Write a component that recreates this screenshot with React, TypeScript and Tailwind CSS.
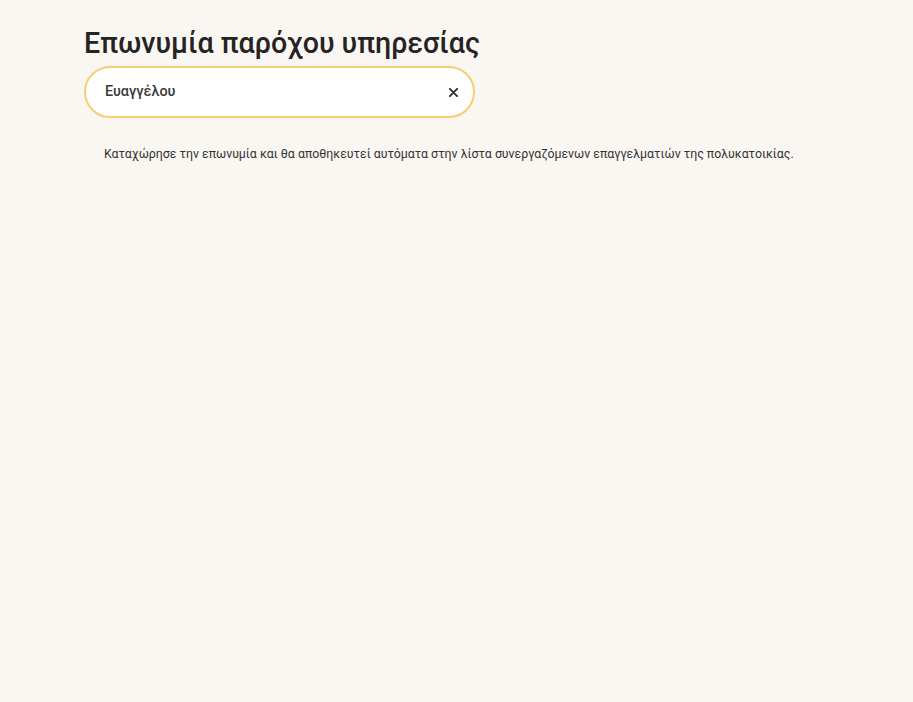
import React, { useState } from 'react';

const App: React.FC = () => {
    const [name, setName] = useState('Ευαγγέλου');

    return (
        <div className="min-h-[702px] w-full bg-[#faf7f2] font-['Roboto','Noto_Sans',sans-serif] text-[#242424]">
            <div className="pl-[84px] pt-[24px]">
                {/* 제목 */}
                <h1 className="text-[28.6px] font-medium leading-[38px]">Επωνυμία παρόχου υπηρεσίας</h1>

                {/* 입력창 */}
                <div className="mt-[4px] flex h-[52px] w-[391px] items-center rounded-full border-2 border-[#f7cd72] bg-white pl-[19px] pr-[10px]">
                    <input
                        value={name}
                        onChange={(e) => setName(e.target.value)}
                        className="flex-1 bg-transparent text-[14.4px] font-medium text-[#3a3a3a] outline-none"
                    />
                    <button
                        type="button"
                        onClick={() => setName('')}
                        className="flex h-5 w-5 items-center justify-center text-[#2a2a2a]"
                    >
                        <svg width="9" height="9" viewBox="0 0 10 10" fill="none">
                            <path d="M1 1L9 9M9 1L1 9" stroke="currentColor" strokeWidth="2" strokeLinecap="round" />
                        </svg>
                    </button>
                </div>

                {/* 안내 문구 */}
                <p className="mt-[27px] pl-[20px] text-[12.35px] leading-[18px] text-[#333333]">
                    Καταχώρησε την επωνυμία και θα αποθηκευτεί αυτόματα στην λίστα συνεργαζόμενων επαγγελματιών της πολυκατοικίας.
                </p>
            </div>
        </div>
    );
};

export default App;
